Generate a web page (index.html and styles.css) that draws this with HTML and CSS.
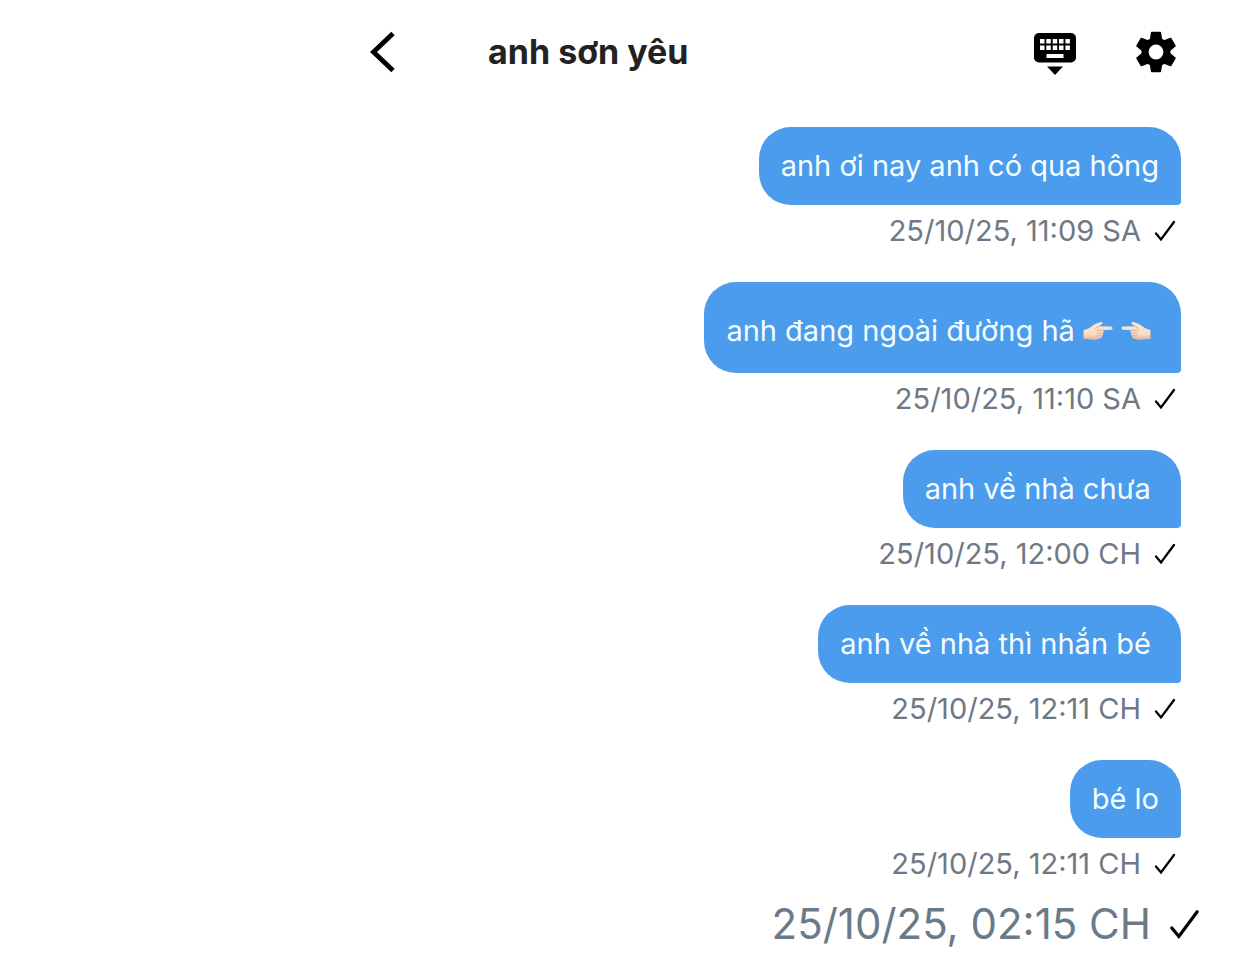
FILE: index.html
```html
<!DOCTYPE html>
<html lang="vi">
<head>
    <meta charset="UTF-8">
    <meta name="viewport" content="width=device-width, initial-scale=1.0">
    <title>anh sơn yêu</title>
    <link rel="stylesheet" href="styles.css">
</head>
<body>
    <svg class="symbols" aria-hidden="true">
        <defs>
            <linearGradient id="skin" x1="0" y1="0" x2="0" y2="1">
                <stop offset="0" stop-color="#fbe6d6"/>
                <stop offset=".7" stop-color="#f8dcc6"/>
                <stop offset="1" stop-color="#d9b092"/>
            </linearGradient>
        </defs>
        <symbol id="check" viewBox="0 0 22 22">
            <path d="M2 13.5 7 19.5 20 2" fill="none" stroke="#000" stroke-width="2.3" stroke-linecap="round"/>
        </symbol>
        <symbol id="hand" viewBox="0 0 30 20">
            <path d="M.5 9C3 8.500 6 7.500 8.500 5.500 11 3.500 14.500 1.500 18 1c1.800-.2 2.100 1.500.7 2.200L16 5.200l12 .3c2 .1 2 3.200 0 3.300l-8 .4c1 .9.800 2.300-.2 2.800.6 1.100.2 2.300-.8 2.700.3 1.300-.3 2.300-1.500 2.600C15 19 10 19.300 7 18.500c-2-.5-4.500-.5-6.500-.5z" fill="url(#skin)"/>
            <path d="M20 9.200l-6 .4M19.600 12l-5.600.3M18.800 14.700l-5 .2M16 5.200l-3.500 2.300" fill="none" stroke="#c99b7c" stroke-width=".7" stroke-linecap="round"/>
        </symbol>
    </svg>

    <header class="topbar">
        <button class="icon-btn back" aria-label="Quay lại">
            <svg width="26" height="42" viewBox="0 0 26 42">
                <path d="M23 2.500 3.500 21 23 39.500" fill="none" stroke="#000" stroke-width="4.800"/>
            </svg>
        </button>
        <h1>anh sơn yêu</h1>
        <button class="icon-btn" aria-label="Bàn phím">
            <svg width="42" height="46" viewBox="0 -4 42 46">
                <rect width="42" height="29.500" rx="5"/>
                <path d="M13 33.500h16l-8 8.500z"/>
                <path d="M6 6h4.500v4.500H6zM12.300 6h4.500v4.500h-4.500zM18.700 6h4.500v4.500h-4.500zM25 6h4.500v4.500H25zM31.400 6h4.500v4.500h-4.500zM6 12.500h4.500V17H6zM12.300 12.500h4.500V17h-4.500zM18.700 12.500h4.500V17h-4.500zM25 12.500h4.500V17H25zM31.400 12.500h4.500V17h-4.500zM12.500 21h17v4h-17z" fill="#fff"/>
            </svg>
        </button>
        <button class="icon-btn" aria-label="Cài đặt">
            <svg width="40" height="42" viewBox="-20 -21 40 42">
                <defs>
                    <path id="teeth" d="M-4.300-20.300h8.600q.7 0 .8.700L6.300-12v24L5.100 19.600q-.1.700-.8.700h-8.600q-.7 0-.8-.7L-6.300 12v-24L-5.100-19.600q.1-.7.8-.7z"/>
                </defs>
                <circle r="14.500"/>
                <use href="#teeth"/>
                <use href="#teeth" transform="rotate(60)"/>
                <use href="#teeth" transform="rotate(120)"/>
                <circle r="7.400" fill="#fff"/>
            </svg>
        </button>
    </header>

    <main>
        <ol class="messages">
            <li>
                <p class="bubble">anh ơi nay anh có qua hông</p>
                <div class="meta"><time>25/10/25, 11:09 SA</time><svg class="check"><use href="#check"/></svg></div>
            </li>
            <li>
                <p class="bubble with-emoji">anh đang ngoài đường hã <svg class="hand" role="img" aria-label="👉🏻"><use href="#hand"/></svg><svg class="hand left" role="img" aria-label="👈🏻"><use href="#hand"/></svg></p>
                <div class="meta"><time>25/10/25, 11:10 SA</time><svg class="check"><use href="#check"/></svg></div>
            </li>
            <li>
                <p class="bubble">anh về nhà chưa </p>
                <div class="meta"><time>25/10/25, 12:00 CH</time><svg class="check"><use href="#check"/></svg></div>
            </li>
            <li>
                <p class="bubble">anh về nhà thì nhắn bé </p>
                <div class="meta"><time>25/10/25, 12:11 CH</time><svg class="check"><use href="#check"/></svg></div>
            </li>
            <li>
                <p class="bubble">bé lo</p>
                <div class="meta"><time>25/10/25, 12:11 CH</time><svg class="check"><use href="#check"/></svg></div>
            </li>
        </ol>
        <div class="meta large"><time>25/10/25, 02:15 CH</time><svg class="check"><use href="#check"/></svg></div>
    </main>
</body>
</html>
```
FILE: styles.css
```css
*{
    margin: 0;
    padding: 0;
    box-sizing: border-box;
}
body{
    font-family: Inter, "Noto Sans", sans-serif;
    background-color: #fff;
    color: #222;
}
.symbols{
    position: absolute;
    width: 0;
    height: 0;
}
.topbar{
    display: flex;
    align-items: center;
    gap: 60px;
    height: 104px;
    padding-left: 370px;
    padding-right: 66px;
}
.topbar h1{
    flex: 1;
    margin-left: 32px;
    font-size: 34px;
    line-height: 42px;
    font-weight: 700;
}
.icon-btn{
    display: flex;
    background: none;
    border: none;
    cursor: pointer;
}
.messages{
    list-style: none;
    display: flex;
    flex-direction: column;
    gap: 33px;
    padding-top: 23px;
    padding-right: 61px;
}
.messages li{
    display: flex;
    flex-direction: column;
    align-items: flex-end;
}
.bubble{
    padding: 21px 22px;
    border-radius: 32px 32px 4px 32px;
    background-color: #4b9cec;
    color: #f5fdff;
    font-size: 29px;
    line-height: 36px;
    white-space: pre-wrap;
}
.with-emoji{
    padding-top: 31px;
    padding-bottom: 24px;
}
.hand{
    width: 30px;
    height: 20px;
    margin-right: 8px;
}
.hand.left{
    transform: scaleX(-1);
}
.meta{
    display: flex;
    justify-content: flex-end;
    align-items: center;
    gap: 13px;
    padding-top: 8px;
    padding-right: 5px;
    color: #6f7885;
    font-size: 29px;
    line-height: 36px;
}
.check{
    width: 22px;
    height: 22px;
}
.large{
    gap: 18px;
    padding-top: 16px;
    padding-right: 42px;
    color: #6b7a88;
    font-size: 42px;
    line-height: 52px;
}
.large .check{
    width: 31px;
    height: 31px;
}
```
